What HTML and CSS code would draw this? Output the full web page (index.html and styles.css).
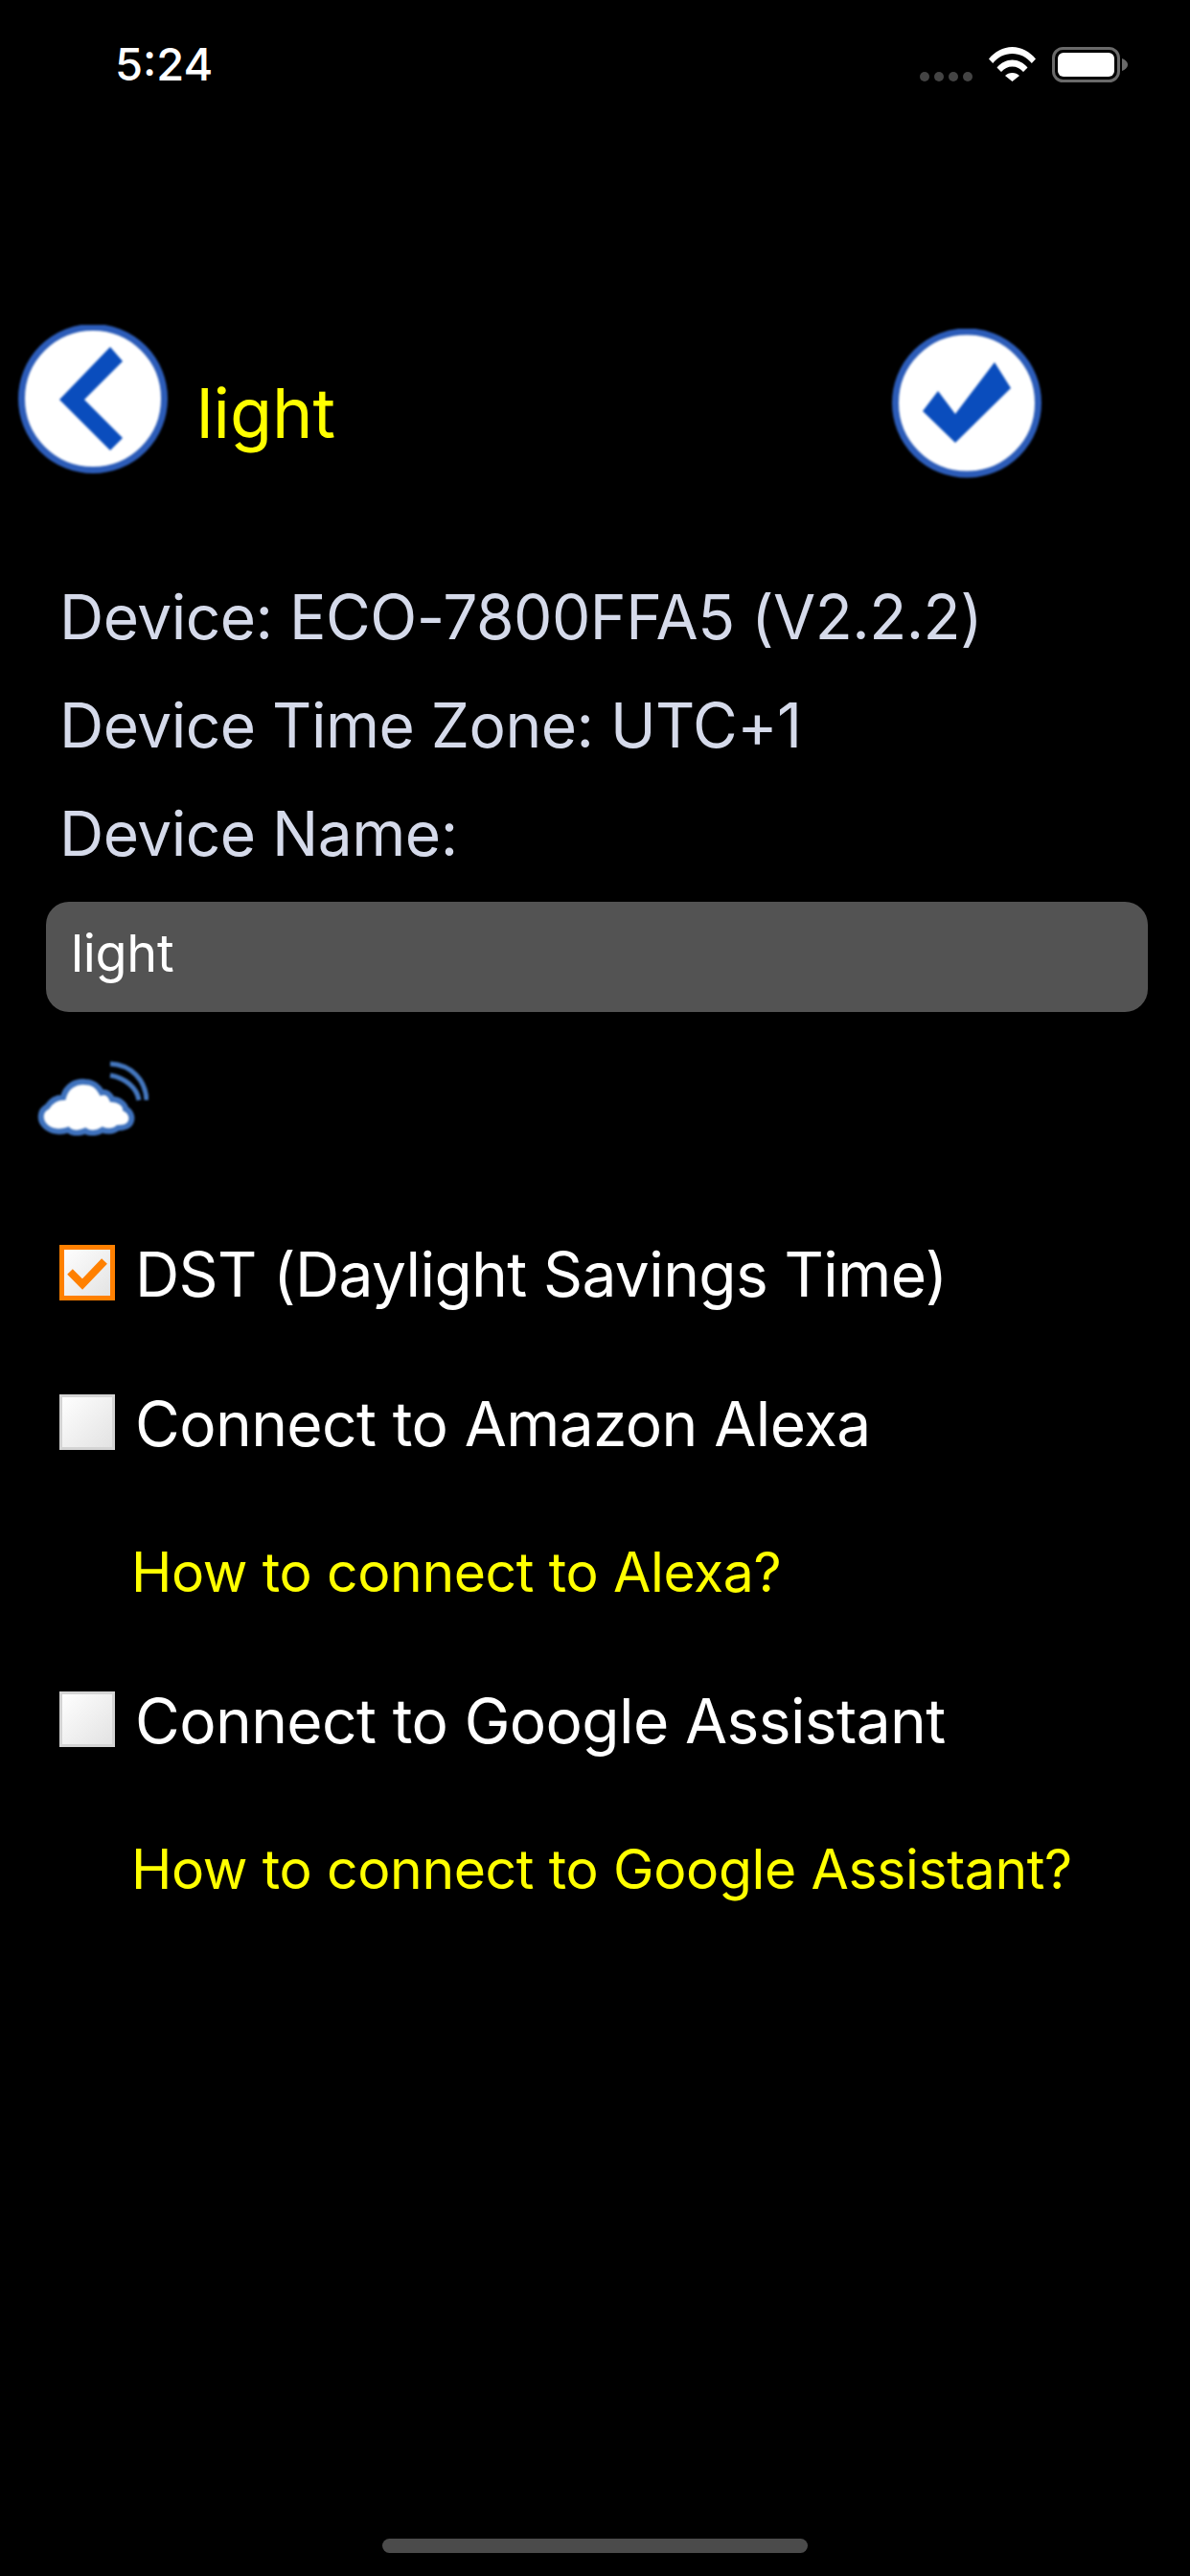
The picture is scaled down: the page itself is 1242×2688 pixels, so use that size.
FILE: index.html
```html
<!DOCTYPE html>
<html lang="en">
<head>
<meta charset="utf-8">
<title>Device settings</title>
<link rel="stylesheet" href="styles.css">
</head>
<body>
<div class="screen">
  <header class="status">
    <span class="time">5:24</span>
    <div class="status-icons">
      <div class="dots"><i></i><i></i><i></i><i></i></div>
      <svg class="wifi" viewBox="0 0 49 36"><path d="M0 12.500C6 5 15 0 24.500 0S43 5 49 12.500L44.800 17C39.500 10.500 32.500 7 24.500 7S9.500 10.500 4.200 17Z" fill="#fff"/><path d="M8.500 21.500C12.500 16.500 18.500 13.500 24.500 13.500S36.500 16.500 40.500 21.500L36 26C33 22.500 29 20.500 24.500 20.500S16 22.500 13 26Z" fill="#fff"/><path d="M17 30C19 28 21.500 27 24.500 27S30 28 32 30L24.500 36Z" fill="#fff"/></svg>
      <svg class="battery" viewBox="0 0 79 37"><rect x="1.500" y="1.500" width="68" height="34" rx="10" fill="none" stroke="#6a6a6a" stroke-width="3"/><rect x="6" y="6" width="59" height="25" rx="6" fill="#fff"/><path d="M73 12C76 13 79 15.500 79 18.500S76 24 73 25Z" fill="#6a6a6a"/></svg>
    </div>
  </header>

  <div class="title-row">
    <svg class="round-btn" viewBox="0 0 156 156"><circle cx="78" cy="77" r="74.500" fill="#fff" stroke="#2c5cb8" stroke-width="7"/><path d="M96 23L109 38 69 78 109 118 96 131 43 78Z" fill="#0a4dbd"/></svg>
    <span class="title">light</span>
    <svg class="round-btn save" viewBox="0 0 156 156"><circle cx="78" cy="77.500" r="74.500" fill="#fff" stroke="#2c5cb8" stroke-width="7"/><path d="M32 86L48 65 66 89 107 35 124 62 66 119Z" fill="#0a4dbd"/></svg>
  </div>

  <div class="info">
    <p class="info-line">Device: ECO-7800FFA5 (V2.2.2)</p>
    <p class="info-line">Device Time Zone: UTC+1</p>
    <p class="info-line">Device Name:</p>
  </div>

  <div class="name-field">light</div>

  <svg class="cloud" viewBox="0 0 116 78"><path d="M8 68C2 62 2 52 10 48 14 42 20 38 27 38 30 26 40 21 50 22 58 22 64 27 67 33 72 32 76 35 78 40 86 40 92 46 92 50 98 53 100 60 97 65 94 70 88 70 84 70 80 74 72 74 68 72 62 76 54 76 50 73 44 76 36 76 32 72 24 75 14 74 8 68Z" fill="#fff" stroke="#3f72bd" stroke-width="6"/><path d="M76 3C98 4 113 20 114 41" fill="none" stroke="#4477bf" stroke-width="5"/><path d="M76 15C92 18 104 28 106 41" fill="none" stroke="#4477bf" stroke-width="5"/></svg>

  <div class="options">
    <div class="option">
      <svg class="box" viewBox="0 0 58 58"><defs><linearGradient id="g1" x1="0" y1="0" x2="1" y2="1"><stop offset="0" stop-color="#fff"/><stop offset="1" stop-color="#e2e2e2"/></linearGradient></defs><rect x="2.500" y="2.500" width="53" height="53" fill="url(#g1)" stroke="#ff8000" stroke-width="5"/><path d="M11 28L24 41 47 17" fill="none" stroke="#ff8000" stroke-width="8"/></svg>
      <span class="option-label">DST (Daylight Savings Time)</span>
    </div>
    <div class="option">
      <svg class="box" viewBox="0 0 58 58"><rect x="1.500" y="1.500" width="55" height="55" fill="url(#g1)" stroke="#d4d4d4" stroke-width="3"/></svg>
      <span class="option-label">Connect to Amazon Alexa</span>
    </div>
    <a class="help">How to connect to Alexa?</a>
    <div class="option">
      <svg class="box" viewBox="0 0 58 58"><rect x="1.500" y="1.500" width="55" height="55" fill="url(#g1)" stroke="#d4d4d4" stroke-width="3"/></svg>
      <span class="option-label">Connect to Google Assistant</span>
    </div>
    <a class="help">How to connect to Google Assistant?</a>
  </div>

  <div class="home-bar"></div>
</div>
</body>
</html>
```
FILE: styles.css
```css
* { box-sizing: border-box; }
html, body { margin: 0; padding: 0; background: #000; }
body { font-family: Inter, "Liberation Sans", sans-serif; color: #fff; }
.screen { width: 1242px; height: 2688px; background: #000; display: flex; flex-direction: column; overflow: hidden; position: relative; }

.status { height: 132px; flex: none; display: flex; justify-content: space-between; padding: 0 65px 0 120px; }
.time { font-size: 47px; font-weight: 500; line-height: 46px; margin-top: 44px; }
.status-icons { display: flex; align-items: flex-start; }
.dots { display: flex; gap: 5px; margin: 75px 17px 0 0; }
.dots i { width: 10px; height: 10px; border-radius: 50%; background: #444; }
.wifi { width: 49px; height: 36px; margin: 49px 17px 0 0; }
.battery { width: 79px; height: 37px; margin-top: 49px; }

.title-row { display: flex; align-items: flex-start; padding: 0 155px 0 19px; margin-top: 207px; height: 160px; flex: none; }
.round-btn { width: 156px; height: 156px; flex: none; filter: blur(1.2px); }
.title { font-size: 72px; line-height: 72px; color: #ff0; margin: 56px 0 0 30px; }
.save { margin: 4px 0 0 auto; }

.info { margin-top: 88px; padding-left: 62px; flex: none; }
.info-line { margin: 0; height: 113px; font-size: 64px; line-height: 113px; color: #d5daea; font-weight: 400; letter-spacing: -0.5px; }

.name-field { margin: 15px 44px 0 48px; height: 115px; background: #535353; border-radius: 24px; padding-left: 26px; font-size: 54px; line-height: 108px; font-weight: 400; letter-spacing: -0.3px; flex: none; }

.cloud { width: 116px; height: 78px; margin: 51px 0 0 39px; flex: none; filter: blur(1.2px); }

.options { margin-top: 114px; padding-left: 62px; flex: none; }
.option { display: flex; align-items: center; height: 58px; gap: 21px; font-size: 64px; font-weight: 400; }
.option + .option { margin-top: 98px; }
.option-label { padding-top: 2px; letter-spacing: -0.6px; }
.box { width: 58px; height: 58px; flex: none; }
.help { display: block; height: 62px; margin: 97px 0 0 75px; font-size: 57px; line-height: 62px; color: #ff0; font-weight: 400; letter-spacing: -0.35px; }
.help + .option { margin-top: 93px; }

.home-bar { position: absolute; left: 399px; top: 2649px; width: 444px; height: 15px; border-radius: 8px; background: #4b4b4b; }
```
